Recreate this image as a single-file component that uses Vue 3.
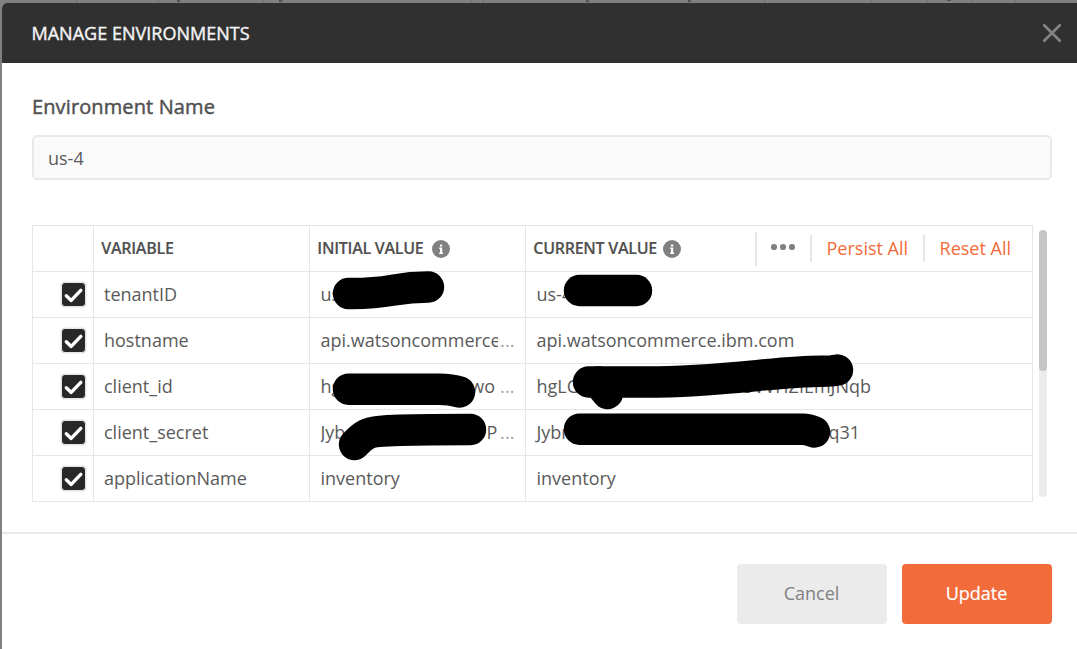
<script setup>
const rows = [
  { name: 'tenantID', initial: 'us-4', current: 'us-4' },
  { name: 'hostname', initial: 'api.watsoncommerce', current: 'api.watsoncommerce.ibm.com', cut: true },
  { name: 'client_id', initial: 'hg', tail: 'wo', tailClass: 'tail-id', current: 'hgLC', currentTail: 'UVVHZIEmJNqb', currentClass: 'current-id', cut: true },
  { name: 'client_secret', initial: 'Jyb', tail: 'P', tailClass: 'tail-secret', current: 'Jybr', currentTail: 'q31', currentClass: 'current-secret', cut: true },
  { name: 'applicationName', initial: 'inventory', current: 'inventory' },
]
const ticks = [76, 157, 178, 262, 281, 470, 482, 586, 688, 764, 870, 926, 971, 1014]
</script>

<template>
  <div class="page">
    <svg class="backdrop" width="1077" height="3" aria-hidden="true">
      <rect v-for="x in ticks" :key="x" :x="x" y="0" width="2" height="3" fill="#777" />
      <path d="M177 0h2l2 2h-4zM279 0h2l2 2h-4zM586 0h2l2 2h-4zM688 0h2l2 2h-4zM947 0h4v1h-4z" fill="#505050" />
    </svg>
    <section class="modal">
      <header class="top">
        <h1>MANAGE ENVIRONMENTS</h1>
        <svg width="20" height="20" viewBox="0 0 20 20"><path d="M2.2 2.2 17.8 17.8M17.8 2.2 2.2 17.8" stroke="#828282" stroke-width="2.8" stroke-linecap="round" /></svg>
      </header>
      <main class="content">
        <label class="label"><span>Environment Name</span></label>
        <div class="field"><span>us-4</span></div>
        <div class="table-wrap">
          <div class="table">
            <div class="row head">
              <div class="cell check"></div>
              <div class="cell"><b>VARIABLE</b></div>
              <div class="cell"><b class="h-init">INITIAL VALUE</b><svg class="info" viewBox="0 0 18 18"><circle cx="9" cy="9" r="9" fill="#808080" /><path d="M8 4.6h2.2v2H8zM7.2 7.6h3v5h.8V14H7.2v-1.4H8V9h-.8z" fill="#fff" /></svg></div>
              <div class="cell">
                <b class="h-curr">CURRENT VALUE</b><svg class="info" viewBox="0 0 18 18"><circle cx="9" cy="9" r="9" fill="#808080" /><path d="M8 4.6h2.2v2H8zM7.2 7.6h3v5h.8V14H7.2v-1.4H8V9h-.8z" fill="#fff" /></svg>
                <div class="actions">
                  <div class="more"><svg width="26" height="8"><circle cx="4" cy="4" r="3.1" /><circle cx="13" cy="4" r="3.1" /><circle cx="22" cy="4" r="3.1" /></svg></div>
                  <a class="persist">Persist All</a>
                  <a class="reset">Reset All</a>
                </div>
              </div>
            </div>
            <div v-for="r in rows" :key="r.name" class="row">
              <div class="cell check">
                <span class="box"><svg width="23" height="23"><path d="m4.3 12.7 4.9 4.7L18.8 7.4" fill="none" stroke="#fff" stroke-width="3.4" stroke-linecap="round" stroke-linejoin="round" /></svg></span>
              </div>
              <div class="cell text">{{ r.name }}</div>
              <div class="cell text value">
                <span class="clip"><span>{{ r.initial }}</span><span v-if="r.tail" :class="r.tailClass">{{ r.tail }}</span></span>
                <span v-if="r.cut" class="dots">...</span>
              </div>
              <div class="cell text value" :class="r.currentClass">
                <span>{{ r.current }}</span><span v-if="r.currentTail" class="current-tail">{{ r.currentTail }}</span>
              </div>
            </div>
            <svg class="ink" width="1001" height="277" viewBox="32 225 1001 277" aria-hidden="true">
              <path d="M348.5 293.5C394 294 391 287 428.5 287" />
              <path d="M579.5 290.5H636.5" />
              <path d="M348.5 389.2H439Q451 389.2 459.5 392" />
              <path d="M607.5 393.5 598 382" />
              <path d="M588.5 382H646C724 382 777 371 822 371.2Q832 371.2 837.5 370" />
              <path d="M354.5 444.5C364 434 369 432.5 378 431.5Q396 429.8 430 429.7L470.5 429.5" />
              <path d="M579.5 429.2H803Q808 429.2 814.5 432" />
            </svg>
          </div>
          <div class="scroll"><div class="thumb"></div></div>
        </div>
      </main>
      <footer class="foot">
        <button class="cancel">Cancel</button>
        <button class="update">Update</button>
      </footer>
    </section>
  </div>
</template>

<style>
body { margin: 0; overflow: hidden; }
</style>

<style scoped>
* { box-sizing: border-box; }
.page { position: relative; width: 1077px; height: 649px; padding: 3px 0 0 2px; background: #808080; font-family: "Open Sans", "Noto Sans", sans-serif; font-size: 18px; color: #505050; overflow: hidden; }
.backdrop { position: absolute; left: 0; top: 0; }
.modal { height: 646px; display: flex; flex-direction: column; background: #fff; border-radius: 5px 0 0 0; overflow: hidden; }
.top { height: 60px; flex: none; background: #303030; display: flex; align-items: center; justify-content: space-between; padding: 0 15px 0 29.5px; }
h1 { margin: 0; font-size: 18px; font-weight: 400; color: #f4f4f4; -webkit-text-stroke: .4px #f4f4f4; letter-spacing: .02px; }
.content { height: 469px; flex: none; padding: 30px 25px 0 29.6px; }
.label { display: block; height: 42px; line-height: 28px; font-size: 20px; letter-spacing: .12px; -webkit-text-stroke: .45px #505050; }
.field { height: 45px; border: 2px solid #e9e9e9; border-radius: 5px; background: #fafafa; padding: 0 14px; line-height: 43px; color: #5a5a5a; }
.content { padding-left: 30px; }
.table-wrap { display: flex; gap: 6px; margin-top: 45px; }
.table { position: relative; width: 1001px; border-top: 1px solid #e6e6e6; }
.row { display: grid; grid-template-columns: 61px 216px 216px 508px; height: 46px; border-bottom: 1px solid #e6e6e6; }
.cell { min-width: 0; display: flex; align-items: center; border-left: 1px solid #e6e6e6; padding-left: 10px; white-space: nowrap; }
.text { padding-bottom: 2px; color: #5a5a5a; }
.value { padding-left: 10.5px; }
.cell:last-child { border-right: 1px solid #e6e6e6; }
.head .cell { padding-left: 7.3px; }
.head b { font-size: 16px; font-weight: 600; line-height: 22px; letter-spacing: -.27px; margin-bottom: 2px; -webkit-text-stroke: .15px #505050; }
.h-init { width: 107px; }
.h-curr { width: 122px; }
.info { flex: none; width: 18px; height: 18px; margin-left: 8px; margin-top: 1px; }
.actions { margin-left: auto; display: flex; align-items: center; color: #f26b3a; margin-right: 21px; }
.more { width: 55px; height: 34px; border-left: 2px solid #e6e6e6; padding: 11px 0 0 13px; fill: #808080; display: flex; align-items: flex-start; }
.actions a { height: 27px; line-height: 26px; border-left: 2px solid #e6e6e6; padding-left: 15px; }
.persist { width: 113px; }
.row .check { padding-left: 28px; }
.box { width: 25px; height: 25px; border: 1px solid #e6e6e6; box-shadow: 0 0 0 .5px #e6e6e6; border-radius: 4px; background: #282828; display: block; }
.box svg { display: block; }
.clip { display: flex; width: 177px; overflow: hidden; }
.dots { color: #a0a0a0; margin-left: 2.5px; letter-spacing: .2px; }
.tail-id { margin-left: 129px; }
.tail-secret { margin-left: 141px; }
.current-tail { margin-left: auto; }
.current-id { padding-right: 161px; }
.current-secret { padding-right: 172px; }
.ink { position: absolute; left: 0; top: -1px; fill: none; stroke: #000; stroke-width: 31.4; stroke-linecap: round; stroke-linejoin: round; }
.scroll { width: 8px; height: 267px; margin-top: 5px; background: #ececec; border-radius: 4px; }
.thumb { height: 141px; background: #c5c5c5; border-radius: 4px; }
.foot { flex: 1; border-top: 2px solid #e9e9e9; display: flex; justify-content: flex-end; gap: 15px; padding: 30px 25px 0; }
button { width: 150px; height: 60px; border: 0; border-radius: 4px; font: 18px "Open Sans", "Noto Sans", sans-serif; padding: 0 1px 3px 0; }
.cancel { background: #ebebeb; color: #808080; }
.update { background: #f26b3a; color: #fff; -webkit-text-stroke: .2px #fff; }
</style>
